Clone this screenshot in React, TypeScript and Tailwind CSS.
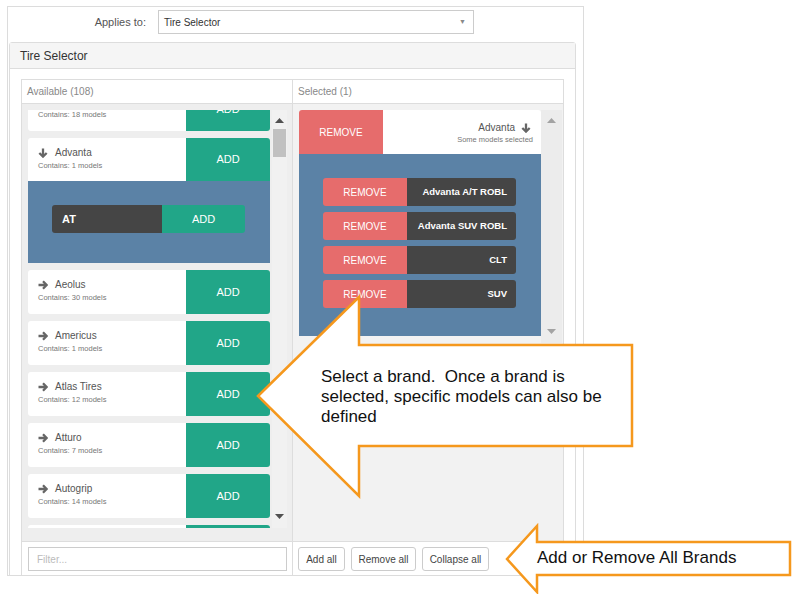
import React from 'react';

const GREEN = 'bg-[#21a688]';

const ArrowRight: React.FC = () => (
  <svg width="10" height="10" viewBox="0 0 10 10" className="shrink-0">
    <path d="M0.5 5H8.5M5 1.3L8.6 5L5 8.7" fill="none" stroke="#666" strokeWidth="2.3" />
  </svg>
);

const ArrowDown: React.FC = () => (
  <svg width="10" height="10" viewBox="0 0 10 10" className="shrink-0">
    <path d="M5 0.5V8.5M1.3 5L5 8.6L8.7 5" fill="none" stroke="#666" strokeWidth="2.3" />
  </svg>
);

const Tri: React.FC<{ up?: boolean; color: string }> = ({ up, color }) => (
  <svg width="9" height="5" viewBox="0 0 9 5">
    <path d={up ? 'M0 5L4.5 0L9 5Z' : 'M0 0L4.5 5L9 0Z'} fill={color} />
  </svg>
);

interface Brand {
  name: string;
  count: number;
}

const brands: Brand[] = [
  { name: 'Aeolus', count: 30 },
  { name: 'Americus', count: 1 },
  { name: 'Atlas Tires', count: 12 },
  { name: 'Atturo', count: 7 },
  { name: 'Autogrip', count: 14 },
];

const BrandInfo: React.FC<{ name?: string; count: number; down?: boolean }> = ({ name, count, down }) => (
  <div className="flex-1 bg-white pl-[10px] pt-[8px]">
    {name && (
      <div className="flex items-center gap-[7px] h-[13px] text-[10px] text-[#555]">
        {down ? <ArrowDown /> : <ArrowRight />}
        <span>{name}</span>
      </div>
    )}
    <div className="mt-[1px] h-[12px] leading-[12px] text-[7.5px] text-[#777]">Contains: {count} models</div>
  </div>
);

const AddButton: React.FC = () => (
  <div className={`w-[84px] ${GREEN} flex items-center justify-center text-white text-[11px]`}>ADD</div>
);

const BrandCard: React.FC<Brand> = ({ name, count }) => (
  <div className="flex h-[44px] rounded-[3px] overflow-hidden shrink-0">
    <BrandInfo name={name} count={count} />
    <AddButton />
  </div>
);

const selectedModels = ['Advanta A/T ROBL', 'Advanta SUV ROBL', 'CLT', 'SUV'];

const App: React.FC = () => {
  return (
    <div className="relative w-[799px] h-[594px] bg-white overflow-hidden font-['Liberation_Sans',Arial,sans-serif]">
      <div className="mt-[6px] ml-[7px] w-[577px] h-[570px] border border-[#dcdcdc] overflow-hidden">
        {/* applies to row */}
        <div className="h-[35px] flex items-start pt-[3px]">
          <div className="w-[138px] h-[24px] leading-[24px] text-right text-[11px] text-[#555]">Applies to:</div>
          <div className="ml-[12px] w-[316px] h-[24px] border border-[#ccc] px-[5px] flex items-center justify-between text-[10px] text-[#333]">
            <span>Tire Selector</span>
            <span className="text-[7px] text-[#888] mr-[2px]">▼</span>
          </div>
        </div>

        {/* panel */}
        <div className="ml-[1px] w-[567px] border border-[#ddd] rounded-t-[3px]">
          <div className="h-[26px] bg-[#f5f5f5] border-b border-[#ddd] px-[10px] flex items-center text-[12px] text-[#333]">
            Tire Selector
          </div>
          <div className="pt-[10px] px-[11px]">
            <div className="w-[543px] border border-[#ddd]">
              {/* header */}
              <div className="flex h-[24px] border-b border-[#ddd] text-[10px] text-[#888]">
                <div className="w-[271px] border-r border-[#ddd] px-[5px] flex items-center">Available (108)</div>
                <div className="flex-1 px-[5px] flex items-center">Selected (1)</div>
              </div>

              {/* body */}
              <div className="flex h-[437px]">
                {/* available */}
                <div className="w-[271px] border-r border-[#ddd] bg-[#eeeeee] pt-[6px] pl-[6px] flex items-start">
                  <div className="w-[242px] h-[418px] overflow-hidden">
                    <div className="flex flex-col gap-[7px] -mt-[23px]">
                      <div className="flex h-[44px] rounded-[3px] overflow-hidden shrink-0">
                        <div className="flex-1 bg-white pl-[10px] pt-[22px]">
                          <div className="h-[12px] leading-[12px] text-[7.5px] text-[#777]">Contains: 18 models</div>
                        </div>
                        <AddButton />
                      </div>
                      <div className="rounded-t-[3px] overflow-hidden shrink-0">
                        <div className="flex h-[43px]">
                          <BrandInfo name="Advanta" count={1} down />
                          <AddButton />
                        </div>
                        <div className="h-[82px] bg-[#5b82a6] pt-[24px] pl-[24px]">
                          <div className="flex h-[28px] w-[193px] rounded-[3px] overflow-hidden text-[11px] text-white">
                            <div className="w-[110px] bg-[#454545] pl-[10px] flex items-center font-bold">AT</div>
                            <div className={`flex-1 ${GREEN} flex items-center justify-center`}>ADD</div>
                          </div>
                        </div>
                      </div>
                      {brands.map((b) => (
                        <BrandCard key={b.name} {...b} />
                      ))}
                      <div className="flex h-[44px] rounded-[3px] overflow-hidden shrink-0">
                        <div className="flex-1 bg-white" />
                        <div className={`w-[84px] ${GREEN}`} />
                      </div>
                    </div>
                  </div>
                  <div className="ml-[2px] w-[15px] h-[418px] bg-[#f1f1f1] flex flex-col items-center">
                    <div className="h-[18px] flex items-center justify-center pt-[2px]">
                      <Tri up color="#505050" />
                    </div>
                    <div className="mt-[1px] w-[13px] h-[28px] bg-[#c1c1c1]" />
                    <div className="flex-1" />
                    <div className="h-[20px] flex items-start justify-center pt-[6px]">
                      <Tri color="#505050" />
                    </div>
                  </div>
                </div>

                {/* selected */}
                <div className="flex-1 bg-[#f2f2f2] pt-[6px] pl-[6px] flex items-start">
                  <div className="w-[242px] h-[232px] overflow-hidden">
                    <div className="rounded-t-[3px] overflow-hidden">
                      <div className="flex h-[44px] bg-white">
                        <div className="w-[84px] bg-[#e66c6c] flex items-center justify-center text-white text-[10px]">REMOVE</div>
                        <div className="flex-1 flex flex-col items-end pr-[8px] pt-[11px]">
                          <div className="flex items-center gap-[6px] h-[13px] text-[10px] text-[#555] pr-[2px]">
                            <span>Advanta</span>
                            <ArrowDown />
                          </div>
                          <div className="h-[12px] leading-[12px] text-[7.5px] text-[#777]">Some models selected</div>
                        </div>
                      </div>
                      <div className="h-[182px] bg-[#5b82a6] pt-[24px] pl-[24px] flex flex-col gap-[6px]">
                        {selectedModels.map((m) => (
                          <div key={m} className="flex h-[28px] w-[193px] rounded-[3px] overflow-hidden text-white">
                            <div className="w-[84px] bg-[#e66c6c] flex items-center justify-center text-[10px]">REMOVE</div>
                            <div className="flex-1 bg-[#454545] flex items-center justify-end pr-[9px] font-bold text-[9.5px] whitespace-nowrap">
                              {m}
                            </div>
                          </div>
                        ))}
                      </div>
                    </div>
                  </div>
                  <div className="w-[21px] h-[233px] bg-[#ececec] flex flex-col items-center">
                    <div className="h-[18px] flex items-center justify-center pt-[2px]">
                      <Tri up color="#a3a3a3" />
                    </div>
                    <div className="flex-1" />
                    <div className="h-[18px] flex items-start justify-center pt-[4px]">
                      <Tri color="#a3a3a3" />
                    </div>
                  </div>
                </div>
              </div>

              {/* footer */}
              <div className="flex h-[34px] border-t border-[#ddd]">
                <div className="w-[271px] border-r border-[#ddd] pt-[5px] pl-[6px]">
                  <div className="w-[259px] h-[24px] border border-[#ccc] px-[8px] flex items-center text-[10px] text-[#bbb]">
                    Filter...
                  </div>
                </div>
                <div className="flex-1 pt-[5px] pl-[5px] flex items-start gap-[6px] text-[10px] text-[#444]">
                  <div className="w-[47px] h-[24px] border border-[#ccc] rounded-[3px] bg-white flex items-center justify-center">Add all</div>
                  <div className="w-[65px] h-[24px] border border-[#ccc] rounded-[3px] bg-white flex items-center justify-center">Remove all</div>
                  <div className="w-[67px] h-[24px] border border-[#ccc] rounded-[3px] bg-white flex items-center justify-center">Collapse all</div>
                </div>
              </div>
            </div>
          </div>
        </div>
      </div>

      {/* callouts */}
      <svg className="absolute left-0 top-0 pointer-events-none" width="799" height="594" viewBox="0 0 799 594">
        <polygon
          points="258,396 359,297 359,345 632,345 632,446 359,446 359,496"
          fill="#ffffff"
          stroke="#f5981d"
          strokeWidth="2.5"
          strokeLinejoin="miter"
        />
        <polygon
          points="507,559 537,526 537,542 790,542 790,575 537,575 537,592"
          fill="#ffffff"
          stroke="#f5981d"
          strokeWidth="2.5"
          strokeLinejoin="miter"
        />
      </svg>
      <div className="absolute left-[321px] top-[367px] text-[17px] leading-[20px] text-[#111] whitespace-nowrap">
        Select a brand.&nbsp; Once a brand is
        <br />
        selected, specific models can also be
        <br />
        defined
      </div>
      <div className="absolute left-[537px] top-[548px] text-[17px] leading-[20px] text-[#111] whitespace-nowrap">
        Add or Remove All Brands
      </div>
    </div>
  );
};

export default App;
